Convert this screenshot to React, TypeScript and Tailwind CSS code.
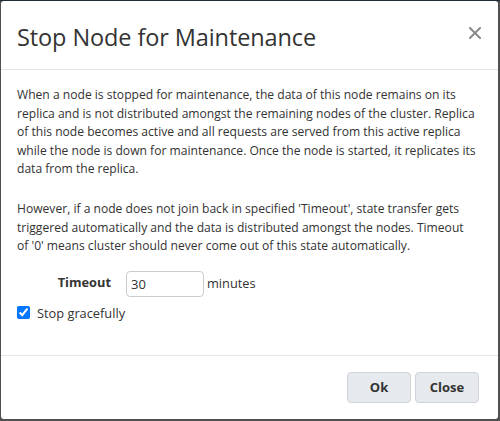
import React from "react";

export default function App() {
  return (
    <div className="w-[500px] h-[421px] bg-[#505050] border-t border-[#1d2b3a] pl-px pr-[1px] overflow-hidden" style={{ fontFamily: '"Open Sans", "Noto Sans", sans-serif' }}>
      <div className="w-[497px] h-[418px] bg-white rounded-[3px] flex flex-col text-[#333]">
        <div className="h-[69px] border-b border-[#e5e5e5] flex items-start justify-between pl-[16px] pr-[17px] pt-[21px] shrink-0">
          <h4 className="text-[23.5px] leading-[30px] font-medium text-[#333] tracking-[-0.1px]">Stop Node for Maintenance</h4>
          <button className="mt-[5px] w-[13px] h-[12px] flex items-center justify-center">
            <svg width="12" height="12" viewBox="0 0 12 12">
              <path d="M1 1 L11 11 M11 1 L1 11" stroke="#8a8a8a" strokeWidth="2" strokeLinecap="square" fill="none" />
            </svg>
          </button>
        </div>
        <div className="flex-1 px-[16px] pt-[16px] text-[12.1px] leading-[18.5px] text-[#333] whitespace-nowrap">
          <p className="mb-[21.5px]">
            When a node is stopped for maintenance, the data of this node remains on its<br />
            replica and is not distributed amongst the remaining nodes of the cluster. Replica<br />
            of this node becomes active and all requests are served from this active replica<br />
            while the node is down for maintenance. Once the node is started, it replicates its<br />
            data from the replica.
          </p>
          <p>
            However, if a node does not join back in specified 'Timeout', state transfer gets<br />
            triggered automatically and the data is distributed amongst the nodes. Timeout<br />
            of '0' means cluster should never come out of this state automatically.
          </p>
          <div className="flex items-center mt-[15px] h-[26px] text-[12.8px]">
            <label className="w-[109px] text-right pr-[15px] font-bold -mt-[3px]">Timeout</label>
            <input
              defaultValue="30"
              className="w-[78px] h-[26px] border border-[#ccc] rounded-[4px] px-[4px] text-[13px] text-[#333] outline-none"
            />
            <span className="ml-[3px]">minutes</span>
          </div>
          <label className="flex items-center mt-[7px] gap-[7px] text-[12.8px]">
            <input type="checkbox" defaultChecked className="w-[13px] h-[13px] m-0 accent-[#0075ff]" />
            <span>Stop gracefully</span>
          </label>
        </div>
        <div className="h-[64px] border-t border-[#e5e5e5] flex justify-end items-start pt-[16px] pr-[19px] gap-[4px] shrink-0">
          <button className="w-[64px] h-[31px] bg-[#e6e9ed] border border-[#d0d4da] rounded-[4px] text-[13px] font-bold text-[#333]">Ok</button>
          <button className="w-[64px] h-[31px] bg-[#e6e9ed] border border-[#d0d4da] rounded-[4px] text-[13px] font-bold text-[#333]">Close</button>
        </div>
      </div>
    </div>
  );
}
